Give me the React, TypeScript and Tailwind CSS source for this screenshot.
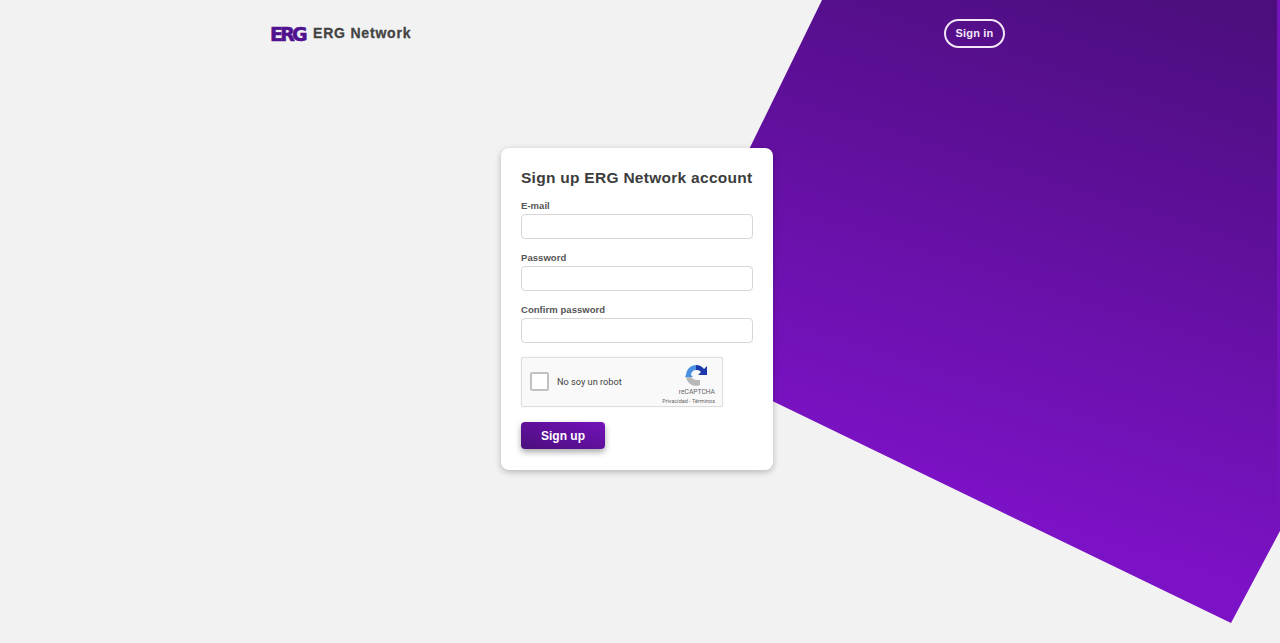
const sans = "font-['Liberation_Sans',Arial,sans-serif]";

const Field = ({ label, mb }: { label: string; mb: string }) => (
  <div className={mb}>
    <label className="block h-[16px] text-[9.5px] leading-[16px] font-bold tracking-[0.05px] text-[#555]">
      {label}
    </label>
    <input className="block w-full h-[25px] bg-white border border-[#d6d6d6] rounded-[4px] outline-none" />
  </div>
);

const RecaptchaIcon = () => (
  <svg width="22" height="22" viewBox="0 0 22 22" fill="none">
    <path d="M15 21 A10 10 0 0 1 1 11 H6 A5 5 0 0 0 11 16 H15 Z" fill="#b8b8b8" />
    <path d="M1 11 A10 10 0 0 1 11 1 V6 A5 5 0 0 0 6 11 L8 13 H0 Z" fill="#4a90e2" />
    <path d="M11 1 A10 10 0 0 1 19 5 L22 2 V11 H13 L16 8 A5 5 0 0 0 11 6 Z" fill="#1c3aa9" />
  </svg>
);

const Recaptcha = () => (
  <div className="flex w-[202px] h-[50px] bg-[#f9f9f9] border border-[#dedede] rounded-[2px] shadow-[0_0_2px_rgba(0,0,0,0.08)]">
    <div className={`flex items-center flex-1 pl-[8px] font-['Roboto',sans-serif]`}>
      <span className="block w-[19px] h-[19px] -mt-[1px] bg-white border-2 border-[#c1c1c1] rounded-[2px]" />
      <span className="ml-[8px] -mt-[1px] text-[9.2px] text-[#444]">No soy un robot</span>
    </div>
    <div className="flex flex-col items-end pt-[6px] pr-[7px] font-['Roboto',sans-serif]">
      <div className="mr-[8px]">
        <RecaptchaIcon />
      </div>
      <span className="mt-[2px] text-[6.7px] leading-[9px] text-[#666]">reCAPTCHA</span>
      <span className="text-[5.5px] leading-[8px] text-[#666]">Privacidad - Términos</span>
    </div>
  </div>
);

export default function App() {
  return (
    <div className={`relative w-full h-[643px] overflow-hidden bg-[#f2f2f2] ${sans}`}>
      {/* background shape */}
      <svg className="absolute inset-0" width="1280" height="643" viewBox="0 0 1280 643">
        <defs>
          <linearGradient id="shape" gradientUnits="userSpaceOnUse" x1="1180" y1="-20" x2="1010" y2="520">
            <stop offset="0" stopColor="#4b0e7c" />
            <stop offset="1" stopColor="#7c12c6" />
          </linearGradient>
        </defs>
        <polygon points="822,0 1277,0 1277,531 1280,531 1231,623 700,366 700,250" fill="url(#shape)" />
        <rect x="1277" y="0" width="3" height="531" fill="#7412bb" />
      </svg>

      <div className="relative ml-[270px] w-[735px]">
        <header className="flex items-center justify-between h-[66px] pt-[1px]">
          <div className="flex items-center">
            <span className="w-[36px] font-['DejaVu_Sans',sans-serif] font-bold text-[19px] leading-[20px] tracking-[-2.8px] text-[#51128f] [-webkit-text-stroke:0.6px_#51128f]">
              ERG
            </span>
            <span className="ml-[7px] font-bold text-[14px] tracking-[0.8px] text-[#444] [-webkit-text-stroke:0.3px_#444]">
              ERG Network
            </span>
          </div>
          <button className="w-[61px] h-[29px] rounded-full border-2 border-[#f3e6f7] text-[11px] font-bold text-[#f3e6f7] tracking-[0.2px]">
            Sign in
          </button>
        </header>

        <div className="ml-[231px] mt-[82px] w-[272px] h-[322px] bg-white rounded-[8px] px-[20px] pt-[20px] shadow-[0_2px_6px_rgba(0,0,0,0.25)]">
          <h1 className="text-[15.5px] leading-[20px] font-bold tracking-[0.28px] whitespace-nowrap text-[#3c3c3c] mb-[10px]">
            Sign up ERG Network account
          </h1>
          <Field label="E-mail" mb="mb-[11px]" />
          <Field label="Password" mb="mb-[11px]" />
          <Field label="Confirm password" mb="mb-[14px]" />
          <Recaptcha />
          <button className="block mt-[15px] w-[84px] h-[27px] rounded-[4px] bg-gradient-to-tr from-[#4b0e7c] to-[#7412bb] text-white text-[12px] font-bold shadow-[0_3px_6px_rgba(0,0,0,0.35)]">
            Sign up
          </button>
        </div>
      </div>
    </div>
  );
}
